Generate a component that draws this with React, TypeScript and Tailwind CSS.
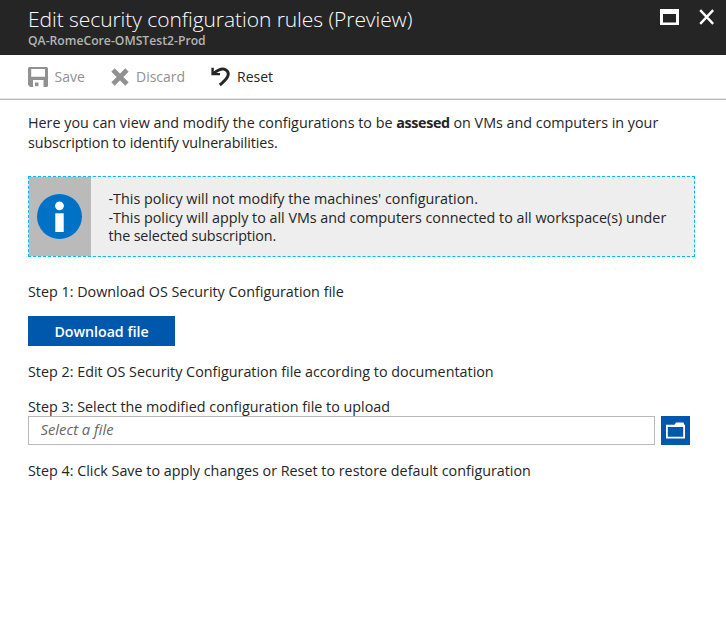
import React from "react";

function SaveIcon() {
  return (
    <svg width="20" height="20" viewBox="0 0 20 20" className="shrink-0">
      <path fill="#919191" fillRule="evenodd" d="M1.5 0H18.5Q20 0 20 1.5V18.5Q20 20 18.5 20H15.5V13H5V20H2.2L0 17.8V1.5Q0 0 1.5 0ZM3.2 2V9.7H17V2Z" />
      <rect x="7" y="15.5" width="3.5" height="3.7" fill="#919191" />
    </svg>
  );
}

function DiscardIcon() {
  return (
    <svg width="18" height="18" viewBox="0 0 18 18" className="shrink-0">
      <path d="M2 2L16 16M16 2L2 16" stroke="#919191" strokeWidth="4.6" />
    </svg>
  );
}

function ResetIcon() {
  return (
    <svg width="20" height="20" viewBox="0 0 20 20" className="shrink-0">
      <path d="M2.4 6.4C6 3.6 9.6 1.3 13 2.1C17.6 3.2 18.2 7.6 15.9 10.8C14.2 13.2 11.6 15.6 8.8 18" fill="none" stroke="#252525" strokeWidth="3" />
      <path d="M1.6 .8V7.1H9" fill="none" stroke="#252525" strokeWidth="2.4" />
    </svg>
  );
}

function Header() {
  return (
    <header className="flex h-[55px] justify-between bg-[#252525] pr-3 pl-7">
      <div className="whitespace-nowrap">
        <h1 className="mt-[5px] h-7 text-[21px] leading-7 font-light tracking-[-0.06px] text-white">Edit security configuration rules (Preview)</h1>
        <p className="h-4 text-[12.2px] leading-4 font-semibold text-[#b4b4b4]">QA-RomeCore-OMSTest2-Prod</p>
      </div>
      <div className="mt-[9px] flex gap-5">
        <svg width="19" height="16" viewBox="0 0 19 16">
          <path fill="#fff" fillRule="evenodd" d="M0 0H19V16H0ZM3 5V13.5H16V5Z" />
        </svg>
        <svg width="15" height="16" viewBox="0 0 15 16">
          <path d="M1.2 1.2L14.2 14.8M14.2 1.2L1.2 14.8" stroke="#fff" strokeWidth="2.4" />
        </svg>
      </div>
    </header>
  );
}

export default function App() {
  return (
    <div className="h-[630px] w-[726px] overflow-hidden bg-white font-['Open_Sans','Noto_Sans',sans-serif] text-[14.33px] leading-5 whitespace-nowrap text-[#252525]">
      <Header />
      <nav className="flex h-[45px] items-center border-b border-[#b9b9b9] pl-7 text-[14px] shadow-[inset_0_-1px_0_#e6e6e6]">
        <SaveIcon />
        <span className="ml-[6.5px] w-[56.5px] text-[#919191]">Save</span>
        <DiscardIcon />
        <span className="ml-[7px] w-[75px] text-[#919191]">Discard</span>
        <ResetIcon />
        <span className="ml-1.5">Reset</span>
      </nav>
      <main className="pl-7">
        <div className="mt-[13px] h-10">
          <p>Here you can view and modify the configurations to be <b className="tracking-[-0.35px]">assesed</b> on VMs and computers in your</p>
          <p className="tracking-[-0.12px]">subscription to identify vulnerabilities.</p>
        </div>
        <section className="mt-[23px] flex h-[81px] w-[667px] border border-dashed border-[#00b9f2] bg-[#eee]">
          <div className="flex w-[62px] items-center bg-[#bababa] pl-2">
            <svg width="45" height="45" viewBox="0 0 45 45">
              <circle cx="22.5" cy="22.5" r="22.5" fill="#0072c6" />
              <circle cx="22.5" cy="11.8" r="4.4" fill="#fff" />
              <rect x="18.3" y="19.3" width="8.4" height="18.7" fill="#fff" />
            </svg>
          </div>
          <div className="pt-[13px] pl-[17.5px] leading-[18.6px]">
            <p>-This policy will not modify the machines&apos; configuration.</p>
            <p>-This policy will apply to all VMs and computers connected to all workspace(s) under</p>
            <p className="tracking-[-0.13px]">the selected subscription.</p>
          </div>
        </section>
        <p className="mt-[25px]">Step 1: Download OS Security Configuration file</p>
        <button className="mt-[14px] block h-[30px] w-[147px] bg-[#0058ad] pt-px text-[14.2px] font-semibold text-white">Download file</button>
        <p className="mt-4">Step 2: Edit OS Security Configuration file according to documentation</p>
        <p className="mt-[15px]">Step 3: Select the modified configuration file to upload</p>
        <div className="-mt-px flex gap-1.5">
          <input placeholder="Select a file" className="h-[29px] w-[627px] border border-[#b9b9b9] pb-1 pl-[11.5px] text-[14.8px] placeholder:text-[#666] placeholder:italic" />
          <button className="flex size-[29px] items-center justify-center bg-[#0058ad]">
            <svg width="19" height="17" viewBox="0 0 19 17">
              <path fill="#fff" fillRule="evenodd" d="M0 2.8H8.5L10 .5H17.5L18.3 2.8H19V16.5H0ZM1.8 5V14.7H17.2V5Z" />
            </svg>
          </button>
        </div>
        <p className="mt-4">Step 4: Click Save to apply changes or Reset to restore default configuration</p>
      </main>
    </div>
  );
}
